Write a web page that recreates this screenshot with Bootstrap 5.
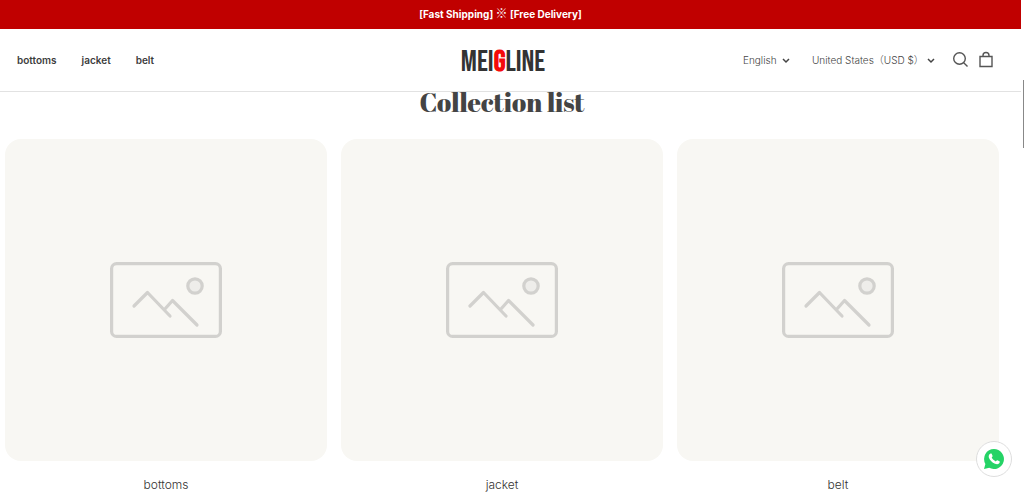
<!DOCTYPE html>
<html lang="en">
<head>
<meta charset="utf-8">
<meta name="viewport" content="width=device-width, initial-scale=1">
<title>MEIGLINE</title>
<link href="https://cdn.jsdelivr.net/npm/bootstrap@5.3.0/dist/css/bootstrap.min.css" rel="stylesheet">
<style>
body{font-family:Inter,"Noto Sans CJK SC",sans-serif;color:#3d3d3d;background:#fff;padding-right:3px;overflow:hidden}
.promo{background:#c00000;font-size:10px;line-height:28px;height:29px;font-weight:700;padding-right:20px}
.promo span{font-family:"Noto Sans CJK SC",sans-serif;font-size:12px;line-height:16px}
.site-head{height:63px;border-bottom:1px solid #e2e2e2;display:grid;grid-template-columns:1fr auto 1fr;padding:0 27px 0 17px}
.menu-links{gap:25px}
.menu-links a{font-size:10px;font-weight:600;color:#3d3d3d}
.brand{font-family:"Bebas Neue","Liberation Sans",sans-serif;font-size:30px;line-height:30px;color:#333;margin:4px 5px 0 0;-webkit-text-stroke:0}
.brand span{color:#f50a0a;font-weight:700}
.picker{appearance:none;border:0;padding:0;font-size:10px;font-weight:300;line-height:16px;color:#444;background:transparent url("data:image/svg+xml,%3Csvg xmlns='http://www.w3.org/2000/svg' width='8' height='6' fill='none' stroke='%23444' stroke-width='1.5'%3E%3Cpath d='M1 1l3 3 3-3'/%3E%3C/svg%3E") no-repeat right 6px}
.lang{width:47px;margin-right:22px}
.region{width:123px;margin-right:17px}
.tool{border:0;padding:0;background:none;color:#555;line-height:0}
.section-title{font-family:"Abril Fatface","Liberation Serif",serif;font-size:26px;line-height:20px;font-weight:400;color:#444;margin:0;padding:0 22px 0 5px}
.tiles{display:grid;grid-template-columns:repeat(3,1fr);gap:14px;padding:27px 22px 0 5px}
.tile{color:#333;font-size:12px;line-height:16px;font-weight:300}
.thumb{aspect-ratio:1;background:#f8f7f3;border-radius:16px;margin-bottom:16px}
.chat{right:12px;bottom:23px;width:36px;height:36px;background:#fff;border:1px solid #ddd}
.scroll-thumb{right:0;top:80px;width:1px;height:68px;background:#888}
</style>
</head>
<body>
<svg class="d-none">
<symbol id="photo" viewBox="0 0 112 76"><g fill="none" stroke="#d2d1ce" stroke-width="3.2"><rect x="1.6" y="1.6" width="108.8" height="72.8" rx="5"/><circle cx="85" cy="24" r="7.2" fill="#eeedea"/><path stroke-linecap="round" stroke-linejoin="round" d="M24 44 37.500 30.500 60 54M54.500 47.500 62.500 38.500 87 63"/></g></symbol>
</svg>
<div class="promo text-white text-center">[Fast Shipping] <span>※</span> [Free Delivery]</div>
<header class="site-head align-items-center">
<nav class="menu-links d-flex" aria-label="Main">
<a class="text-decoration-none" href="#bottoms">bottoms</a>
<a class="text-decoration-none" href="#jacket">jacket</a>
<a class="text-decoration-none" href="#belt">belt</a>
</nav>
<a class="brand text-decoration-none" href="#home">MEI<span>G</span>LINE</a>
<div class="d-flex justify-content-end align-items-center">
<select class="picker lang" aria-label="Language"><option>English</option></select>
<select class="picker region" aria-label="Country and currency"><option>United States（USD $）</option></select>
<button class="tool me-2" type="button" aria-label="Search"><svg width="18" height="18" fill="none" stroke="currentColor" stroke-width="1.4"><circle cx="7.500" cy="7.500" r="5.800"/><path d="M11.700 11.700 15.500 15.500"/></svg></button>
<button class="tool" type="button" aria-label="Cart"><svg width="16" height="18" fill="none" stroke="currentColor" stroke-width="1.4"><path d="M2 5.500h12v10H2zM5 5.500V4.500a3 3 0 0 1 6 0v1"/></svg></button>
</div>
</header>
<main>
<h2 class="section-title text-center">Collection list</h2>
<div class="tiles text-center">
<a class="tile text-decoration-none" id="bottoms" href="#bottoms"><div class="thumb d-flex align-items-center justify-content-center"><svg width="112" height="76"><use href="#photo"/></svg></div>bottoms</a>
<a class="tile text-decoration-none" id="jacket" href="#jacket"><div class="thumb d-flex align-items-center justify-content-center"><svg width="112" height="76"><use href="#photo"/></svg></div>jacket</a>
<a class="tile text-decoration-none" id="belt" href="#belt"><div class="thumb d-flex align-items-center justify-content-center"><svg width="112" height="76"><use href="#photo"/></svg></div>belt</a>
</div>
</main>
<a class="chat position-fixed rounded-circle d-flex align-items-center justify-content-center" href="#chat" aria-label="WhatsApp chat"><svg width="22" height="22" viewBox="0 0 22 22"><path fill="#25d366" d="M11 1a10 10 0 1 1-4.800 18.800L1 21l1.400-5A10 10 0 0 1 11 1z"/><path fill="#fff" d="M7.600 5.500c.5-.1 1 0 1.200.5l.8 2c.1.400-.6 1.200-.9 1.600.9 1.800 2.200 3 4.100 3.800.5-.5 1-1.400 1.500-1.200l2.200 1.100c.6.300.1 1.800-.5 2.300-1 .8-2.400.9-4 .2-3-1.200-4.900-3.200-6-5.700-.7-1.800-.3-3.800 1.600-4.600z"/></svg></a>
<div class="scroll-thumb position-fixed" aria-hidden="true"></div>
<script src="https://cdn.jsdelivr.net/npm/bootstrap@5.3.0/dist/js/bootstrap.bundle.min.js"></script>
</body>
</html>
